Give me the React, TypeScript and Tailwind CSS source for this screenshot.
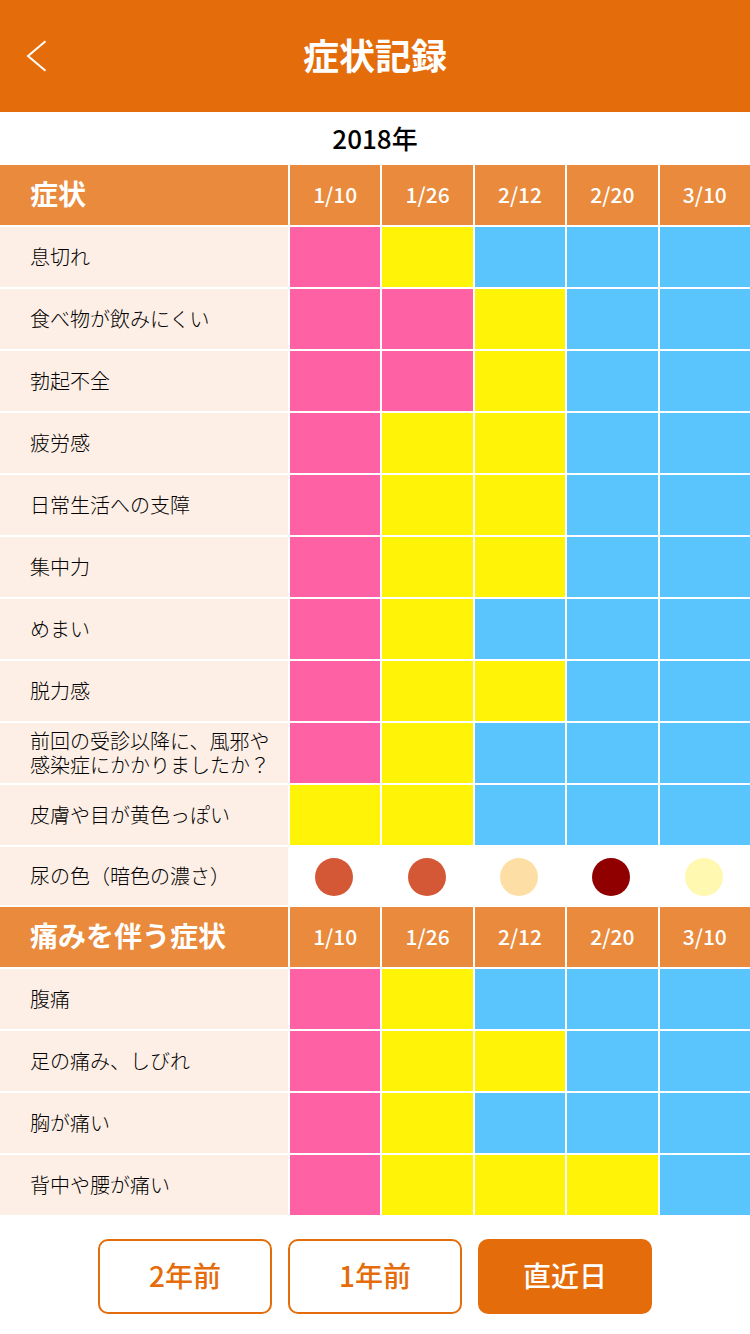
type Level = "p" | "y" | "b";

type Row = {
  label: string;
  levels: string;
};

const dates = ["1/10", "1/26", "2/12", "2/20", "3/10"];

const levelStyles: Record<Level, string> = {
  p: "bg-[#fe62a5]",
  y: "bg-[#fff407]",
  b: "bg-[#5ac5fd]",
};

const levelNames: Record<Level, string> = {
  p: "重い",
  y: "中程度",
  b: "軽い",
};

const generalRows: Row[] = [
  { label: "息切れ", levels: "pybbb" },
  { label: "食べ物が飲みにくい", levels: "ppybb" },
  { label: "勃起不全", levels: "ppybb" },
  { label: "疲労感", levels: "pyybb" },
  { label: "日常生活への支障", levels: "pyybb" },
  { label: "集中力", levels: "pyybb" },
  { label: "めまい", levels: "pybbb" },
  { label: "脱力感", levels: "pyybb" },
  { label: "前回の受診以降に、風邪や\n感染症にかかりましたか？", levels: "pybbb" },
  { label: "皮膚や目が黄色っぽい", levels: "yybbb" },
];

const painRows: Row[] = [
  { label: "腹痛", levels: "pybbb" },
  { label: "足の痛み、しびれ", levels: "pyybb" },
  { label: "胸が痛い", levels: "pybbb" },
  { label: "背中や腰が痛い", levels: "pyyyb" },
];

const urineColors = [
  "bg-[#d45835]",
  "bg-[#d45835]",
  "bg-[#fddfa6]",
  "bg-[#900000]",
  "bg-[#fff8b0]",
];

function SectionHeader({ title }: { title: string }) {
  return (
    <tr className="h-[62px] text-white">
      <th
        scope="col"
        className="border-b-2 border-white bg-[#e98a3c] pt-0 pr-2 pb-1 pl-[30px] text-left text-[28px] leading-none font-bold"
      >
        {title}
      </th>
      {dates.map((date) => (
        <th
          key={date}
          scope="col"
          className="border-b-2 border-l-2 border-white bg-[#e98a3c] px-0 pt-0 pb-px text-center text-[21px] leading-none font-medium"
        >
          {date}
        </th>
      ))}
    </tr>
  );
}

const labelClass =
  "border-b-2 border-white bg-[#fdefe6] py-0 pl-[30px] text-left text-[20px] leading-6 font-light whitespace-pre";

function SymptomRow({ row }: { row: Row }) {
  return (
    <tr className="h-[62px]">
      <th scope="row" className={labelClass}>
        {row.label}
      </th>
      {row.levels.split("").map((level, i) => (
        <td
          key={dates[i]}
          aria-label={levelNames[level as Level]}
          className={`border-b-2 border-l-2 border-white p-0 ${levelStyles[level as Level]}`}
        />
      ))}
    </tr>
  );
}

const buttonClass =
  "h-[75px] w-[174px] rounded-[10px] border-2 border-[#e46c0a] pb-[3px] text-[28px] leading-none font-medium";

export default function App() {
  return (
    <div className="min-h-screen bg-white font-['Noto_Sans_CJK_JP',sans-serif] text-black">
      <header className="grid h-28 grid-cols-[80px_1fr_80px] items-center bg-[#e46c0a] text-white">
        <button type="button" aria-label="戻る" className="flex h-full items-center pl-[26px]">
          <svg width="22" height="32" viewBox="0 0 22 32" fill="none" stroke="currentColor" strokeWidth="2">
            <path d="M19.5 1.2 2 16l17.5 14.8" />
          </svg>
        </button>
        <h1 className="pb-1 text-center text-[36px] leading-none font-bold">症状記録</h1>
      </header>

      <main>
        <h2 className="flex h-[53px] items-center justify-center pb-[2px] text-[26px] leading-none font-medium">
          2018年
        </h2>
        <table className="w-full table-fixed border-separate border-spacing-0">
          <colgroup>
            <col className="w-[38.4%]" />
            {dates.map((date) => (
              <col key={date} />
            ))}
          </colgroup>
          <tbody>
            <SectionHeader title="症状" />
            {generalRows.map((row) => (
              <SymptomRow key={row.label} row={row} />
            ))}
            <tr className="h-[60px]">
              <th scope="row" className={labelClass}>
                尿の色（暗色の濃さ）
              </th>
              {urineColors.map((color, i) => (
                <td key={dates[i]} className="p-0">
                  <div className={`mx-auto size-[38px] rounded-full ${color}`} />
                </td>
              ))}
            </tr>
          </tbody>
          <tbody>
            <SectionHeader title="痛みを伴う症状" />
            {painRows.map((row) => (
              <SymptomRow key={row.label} row={row} />
            ))}
          </tbody>
        </table>
        <div className="flex justify-center gap-4 pt-[22px] pb-5">
          <button type="button" className={`${buttonClass} bg-white text-[#e46c0a]`}>
            2年前
          </button>
          <button type="button" className={`${buttonClass} bg-white text-[#e46c0a]`}>
            1年前
          </button>
          <button type="button" aria-pressed="true" className={`${buttonClass} bg-[#e46c0a] text-white`}>
            直近日
          </button>
        </div>
      </main>
    </div>
  );
}
